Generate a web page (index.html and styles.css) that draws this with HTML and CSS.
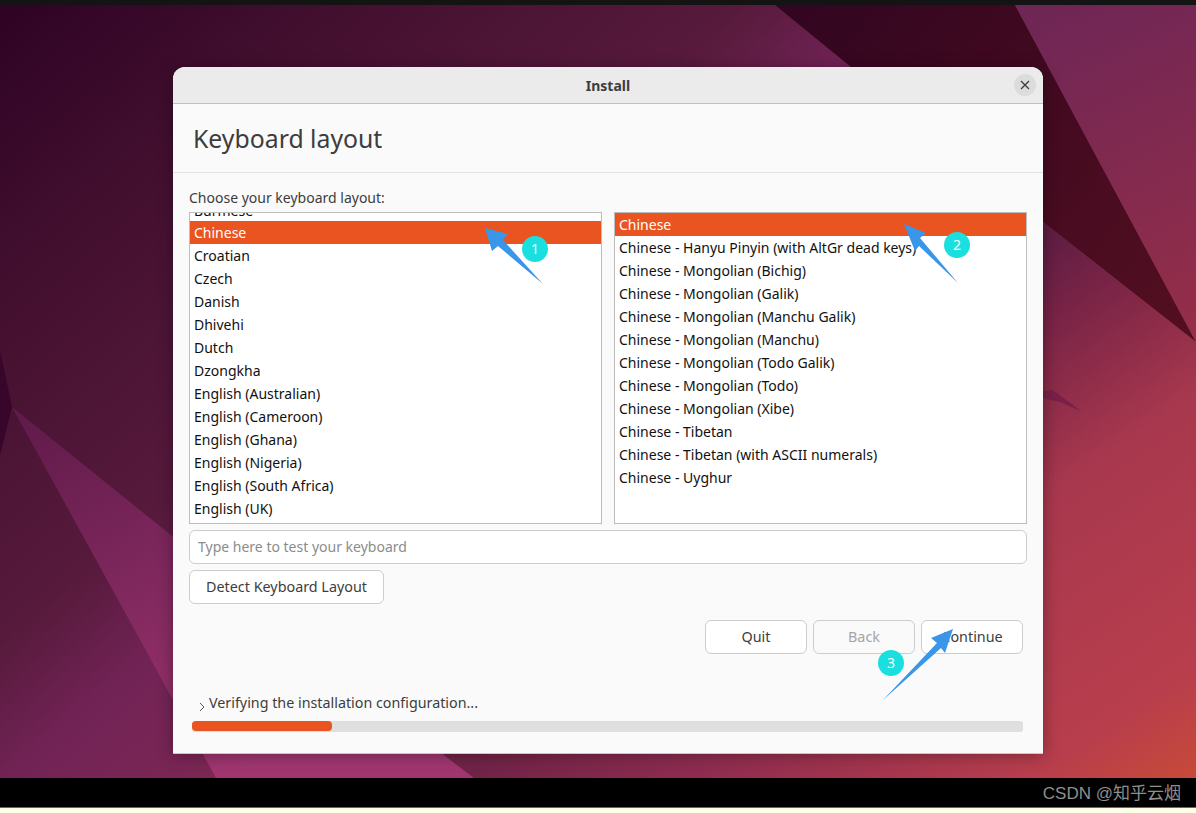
FILE: index.html
```html
<!DOCTYPE html>
<html lang="en">
<head>
  <meta charset="UTF-8" />
  <title>Install</title>
  <link rel="stylesheet" href="styles.css">
</head>
<body>
  <div class="screen">
    <svg class="wallpaper" viewBox="0 5 1196 773" preserveAspectRatio="none">
      <defs>
        <linearGradient id="base" gradientUnits="userSpaceOnUse" x1="0" y1="0" x2="600" y2="700">
          <stop offset="0" stop-color="#2e0224"/>
          <stop offset="0.26" stop-color="#441030"/>
          <stop offset="0.53" stop-color="#571a3c"/>
          <stop offset="0.65" stop-color="#722356"/>
          <stop offset="1" stop-color="#8a2c50"/>
        </linearGradient>
        <linearGradient id="light" gradientUnits="userSpaceOnUse" x1="12" y1="407" x2="216" y2="778">
          <stop offset="0" stop-color="#5e1a4a"/>
          <stop offset="1" stop-color="#a03670"/>
        </linearGradient>
        <linearGradient id="dark" gradientUnits="userSpaceOnUse" x1="775" y1="5" x2="1196" y2="342">
          <stop offset="0" stop-color="#310520"/>
          <stop offset="1" stop-color="#540f20"/>
        </linearGradient>
        <linearGradient id="corner" gradientUnits="userSpaceOnUse" x1="1040" y1="5" x2="1196" y2="342">
          <stop offset="0" stop-color="#6e2656"/>
          <stop offset="1" stop-color="#962e48"/>
        </linearGradient>
        <linearGradient id="strip" gradientUnits="userSpaceOnUse" x1="474" y1="0" x2="1043" y2="0">
          <stop offset="0" stop-color="#702346"/>
          <stop offset="0.4" stop-color="#8e2c50"/>
          <stop offset="1" stop-color="#b83e4c"/>
        </linearGradient>
        <linearGradient id="red" gradientUnits="userSpaceOnUse" x1="800" y1="200" x2="1196" y2="778">
          <stop offset="0.22" stop-color="#5a1c42"/>
          <stop offset="0.35" stop-color="#7a2446"/>
          <stop offset="0.55" stop-color="#a8384e"/>
          <stop offset="0.87" stop-color="#b83e4c"/>
          <stop offset="1" stop-color="#c84a38"/>
        </linearGradient>
      </defs>
      <rect y="5" width="1196" height="773" fill="url(#base)"/>
      <polygon points="0,350 12,407 0,455" fill="#38062a"/>
      <polygon points="12,407 440,752 474,778 216,778" fill="url(#light)"/>
      <polygon points="474,778 440,752 1043,752 1043,778" fill="url(#strip)"/>
      <polygon points="775,5 1015,5 1196,342 1043,222 851,67" fill="url(#dark)"/>
      <polygon points="1015,5 1196,5 1196,342" fill="url(#corner)"/>
      <polygon points="1043,222 1196,342 1196,778 1043,778" fill="url(#red)"/>
      <polygon points="1043,391 1053,390 1081,411 1060,402 1043,398" fill="#7a2048"/>
    </svg>
    <div class="window">
      <div class="titlebar">
        <span class="title">Install</span>
        <span class="close">
          <svg width="10" height="10" viewBox="0 0 10 10"><path d="M1 1l8 8M9 1l-8 8" stroke="#3d3d3d" stroke-width="1.3"/></svg>
        </span>
      </div>
      <h1 class="heading">Keyboard layout</h1>
      <div class="content">
        <div class="label">Choose your keyboard layout:</div>
        <div class="lists">
          <div class="list">
            <div class="row cut">Burmese</div>
            <div class="row selected">Chinese</div>
            <div class="row">Croatian</div>
            <div class="row">Czech</div>
            <div class="row">Danish</div>
            <div class="row">Dhivehi</div>
            <div class="row">Dutch</div>
            <div class="row">Dzongkha</div>
            <div class="row">English (Australian)</div>
            <div class="row">English (Cameroon)</div>
            <div class="row">English (Ghana)</div>
            <div class="row">English (Nigeria)</div>
            <div class="row">English (South Africa)</div>
            <div class="row">English (UK)</div>
          </div>
          <div class="list">
            <div class="row selected">Chinese</div>
            <div class="row">Chinese - Hanyu Pinyin (with AltGr dead keys)</div>
            <div class="row">Chinese - Mongolian (Bichig)</div>
            <div class="row">Chinese - Mongolian (Galik)</div>
            <div class="row">Chinese - Mongolian (Manchu Galik)</div>
            <div class="row">Chinese - Mongolian (Manchu)</div>
            <div class="row">Chinese - Mongolian (Todo Galik)</div>
            <div class="row">Chinese - Mongolian (Todo)</div>
            <div class="row">Chinese - Mongolian (Xibe)</div>
            <div class="row">Chinese - Tibetan</div>
            <div class="row">Chinese - Tibetan (with ASCII numerals)</div>
            <div class="row">Chinese - Uyghur</div>
          </div>
        </div>
        <input class="test-input" type="text" placeholder="Type here to test your keyboard" />
        <div class="detect-row"><button class="btn detect">Detect Keyboard Layout</button></div>
        <div class="actions">
          <button class="btn">Quit</button>
          <button class="btn disabled">Back</button>
          <button class="btn">Continue</button>
        </div>
        <div class="status">
          <svg class="chevron" width="6" height="10" viewBox="0 0 6 10"><path d="M1 1l4 4-4 4" fill="none" stroke="#555" stroke-width="1"/></svg>
          <span>Verifying the installation configuration...</span>
        </div>
        <div class="progress"><div class="progress-fill"></div></div>
      </div>
    </div>
    <!-- annotations drawn on top of the screenshot -->
    <svg class="arrows" viewBox="0 0 1196 813">
      <polygon points="485,228 508,234 503,240 543,284 498,246 492,251" fill="#3a96e8"/>
      <polygon points="904,224 926,233 920,238 958,283 919,246 915,251" fill="#3a96e8"/>
      <polygon points="953,629 931,638 937,643 883,700 941,648 945,653" fill="#3a96e8"/>
    </svg>
    <span class="badge badge-1">1</span>
    <span class="badge badge-2">2</span>
    <span class="badge badge-3">3</span>
  </div>
  <div class="watermark-bar"><span class="watermark">CSDN @知乎云烟</span></div>
</body>
</html>
```

FILE: styles.css
```css
* {
  box-sizing: border-box;
}
html, body {
  margin: 0;
  height: 813px;
  overflow: hidden;
  background: #feffe6;
}
body {
  font-family: "Noto Sans", "Liberation Sans", sans-serif;
  font-size: 14px;
  color: #111;
}
.screen {
  position: relative;
  height: 778px;
  border-top: 5px solid #141414;
  padding: 62px 153px 0 173px;
  overflow: hidden;
}
.wallpaper {
  position: absolute;
  left: 0;
  top: 0;
  width: 1196px;
  height: 773px;
}
.window {
  position: relative;
  width: 870px;
  height: 686px;
  background: #fafafa;
  border-radius: 12px 12px 0 0;
  box-shadow: 0 1px 0 #c8c8c8, 0 2px 16px rgba(0, 0, 0, 0.35);
}
.titlebar {
  height: 37px;
  background: #ebebeb;
  border-bottom: 1px solid #bfbfbf;
  border-radius: 12px 12px 0 0;
  display: flex;
  align-items: center;
  justify-content: center;
  position: relative;
}
.title {
  font-weight: 700;
  color: #3d3d3d;
}
.close {
  position: absolute;
  right: 7px;
  top: 7px;
  width: 22px;
  height: 22px;
  border-radius: 50%;
  background: #dcdcdc;
  display: flex;
  align-items: center;
  justify-content: center;
}
.heading {
  margin: 0;
  height: 69px;
  padding: 17px 0 0 20px;
  font-size: 24.8px;
  font-weight: 400;
  line-height: 34px;
  color: #3d3d3d;
  border-bottom: 1px solid #e3e3e3;
}
.content {
  padding: 14px 16px 0;
}
.label {
  height: 25px;
  line-height: 22px;
  color: #3d3d3d;
}
.lists {
  display: flex;
  gap: 12px;
}
.list {
  width: 413px;
  height: 312px;
  background: #fff;
  border: 1px solid #bdbdbd;
  overflow: hidden;
}
.row {
  height: 23px;
  line-height: 23px;
  padding-left: 4px;
  white-space: nowrap;
}
.row.cut {
  height: 10px;
  margin-top: -2px;
  line-height: 0;
}
.row.selected {
  background: #e95420;
  color: #fff;
}
.test-input {
  display: block;
  width: 100%;
  height: 34px;
  margin-top: 6px;
  padding: 0 8px 2px;
  font: inherit;
  background: #fff;
  border: 1px solid #cdcdcd;
  border-radius: 6px;
  outline: none;
}
.test-input::placeholder {
  color: #8c8c8c;
}
.detect-row {
  margin-top: 6px;
}
.btn {
  height: 34px;
  width: 102px;
  padding: 0 0 2px;
  font: inherit;
  font-size: 14.35px;
  color: #3d3d3d;
  background: #fff;
  border: 1px solid #cdcdcd;
  border-radius: 6px;
}
.btn.detect {
  width: 195px;
}
.btn.disabled {
  color: #a5a5a5;
  background: #fafafa;
}
.actions {
  display: flex;
  justify-content: flex-end;
  gap: 6px;
  margin-top: 16px;
  padding-right: 4px;
}
.status {
  display: flex;
  align-items: flex-start;
  gap: 4px;
  margin-top: 39px;
  padding-left: 10px;
  height: 19px;
  line-height: 20px;
  font-size: 14.3px;
  color: #3d3d3d;
}
.chevron {
  margin-top: 9px;
}
.progress {
  width: 831px;
  height: 11px;
  margin: 9px 0 0 3px;
  background: #dfdfdf;
  border-radius: 3px;
}
.progress-fill {
  width: 140px;
  height: 10px;
  background: #e95420;
  border-radius: 4px;
}
.arrows {
  position: absolute;
  left: 0;
  top: -5px;
  width: 1196px;
  height: 813px;
  pointer-events: none;
}
.badge {
  position: absolute;
  width: 26px;
  height: 26px;
  border-radius: 50%;
  background: #19dfdf;
  color: #fff;
  text-align: center;
  line-height: 26px;
  font-size: 14px;
}
.badge-1 {
  left: 522px;
  top: 231px;
}
.badge-2 {
  left: 944px;
  top: 227px;
}
.badge-3 {
  left: 878px;
  top: 645px;
}
.watermark-bar {
  height: 30px;
  background: #000;
  border-bottom: 1px solid #6b6b55;
  text-align: right;
  padding-right: 15px;
  line-height: 32px;
}
.watermark {
  font-family: "Liberation Sans", "Noto Sans CJK SC", sans-serif;
  font-size: 17px;
  color: #8f8f8f;
}
```
